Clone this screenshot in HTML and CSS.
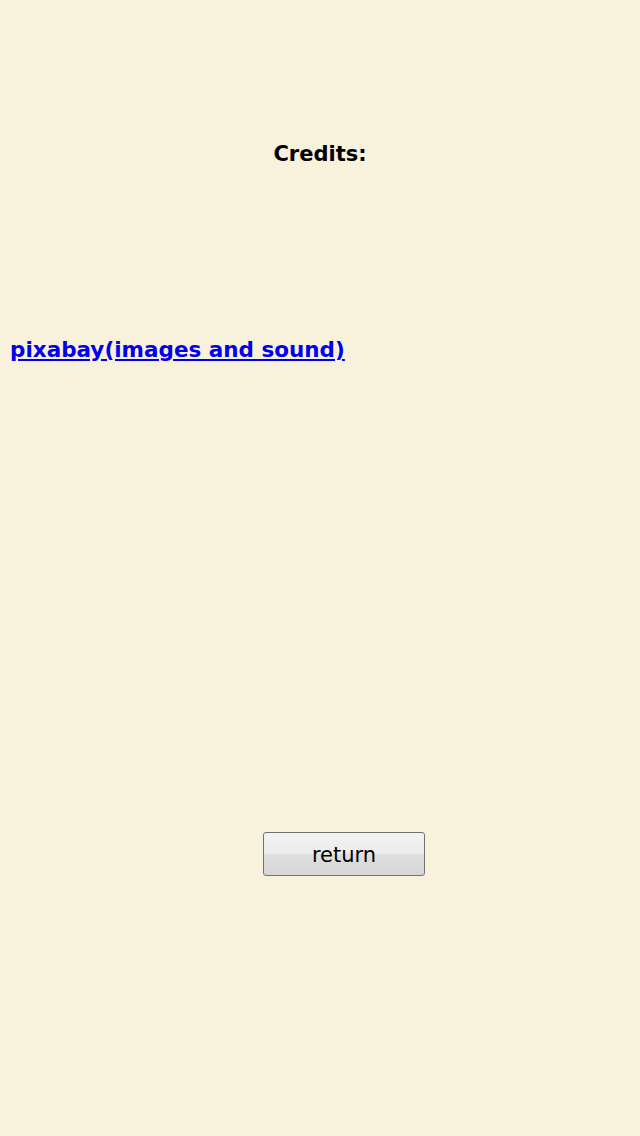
FILE: index.html
```html
<!DOCTYPE html>
<html>
<head>
<meta charset="utf-8">
<link rel="stylesheet" href="styles.css">
</head>
<body>
<div class="page">
  <h1 class="title">Credits:</h1>
  <a class="credit-link" href="#">pixabay(images and sound)</a>
  <div class="actions">
    <button class="return-btn">return</button>
  </div>
</div>
</body>
</html>
```
FILE: styles.css
```css
html, body {
  margin: 0;
  padding: 0;
  background: #f8f1dc;
}
.page {
  display: flex;
  flex-direction: column;
  height: 1136px;
  font-family: "DejaVu Sans", Verdana, sans-serif;
}
.title {
  margin: 0;
  padding-top: 139px;
  height: 30px;
  text-align: center;
  font-size: 21px;
  font-weight: bold;
  color: #000;
  line-height: 30px;
}
.credit-link {
  margin-top: 166px;
  margin-left: 10px;
  align-self: flex-start;
  font-size: 21.5px;
  font-weight: bold;
  line-height: 30px;
  color: #0000ee;
  text-decoration: underline;
}
.actions {
  margin-top: 467px;
  padding-left: 263px;
}
.return-btn {
  width: 162px;
  height: 44px;
  border: 1px solid #707070;
  border-radius: 3px;
  background: linear-gradient(#f3f3f3 0%, #ececec 48%, #dedede 52%, #d6d6d6 100%);
  font-family: "DejaVu Sans", Verdana, sans-serif;
  font-size: 21px;
  color: #000;
  padding: 2px 0 0 0;
}
```
